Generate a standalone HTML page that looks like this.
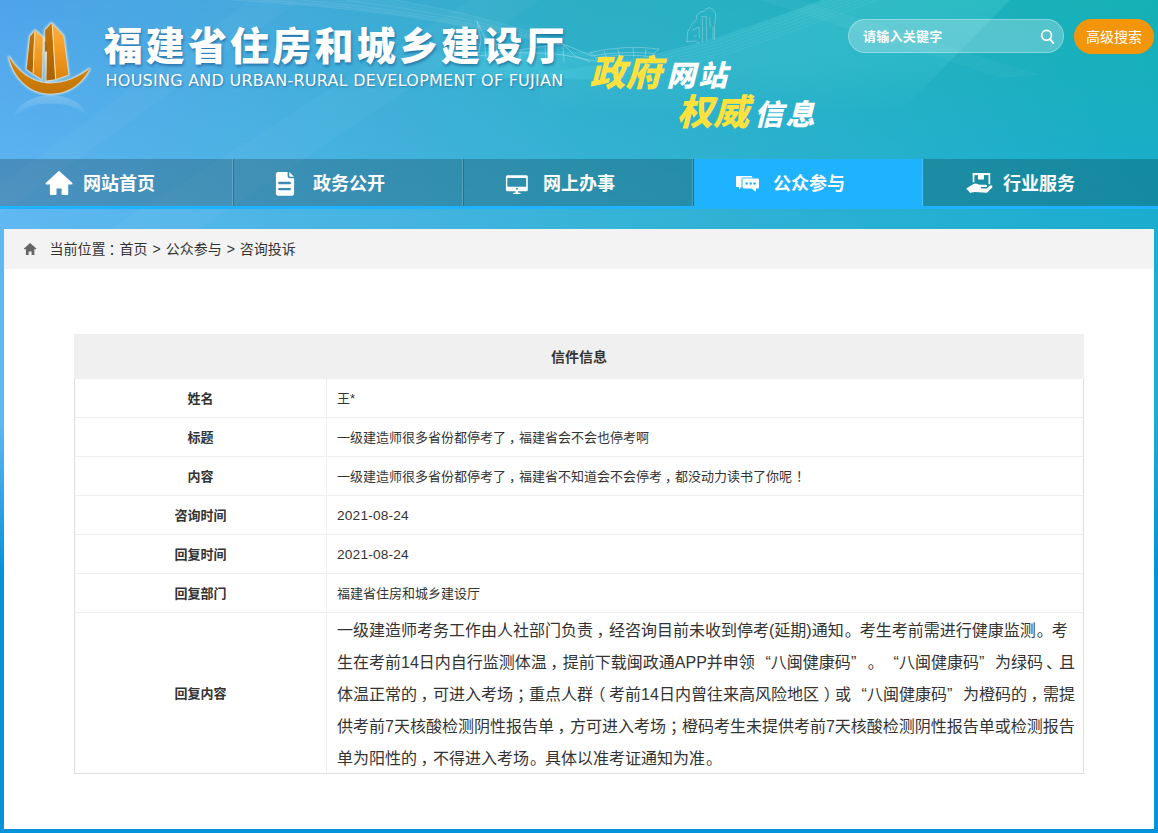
<!DOCTYPE html>
<html lang="zh-CN">
<head>
<meta charset="utf-8">
<title>福建省住房和城乡建设厅</title>
<style>
*{margin:0;padding:0;box-sizing:border-box;}
html,body{width:1158px;height:833px;overflow:hidden;}
body{text-spacing-trim:space-all;font-family:"Liberation Sans","Noto Sans CJK SC",sans-serif;font-size:13px;color:#333;background:#0391d8;position:relative;}
.bg{position:absolute;left:0;top:0;width:1158px;height:833px;background:#0492da;}
.bgB{position:absolute;left:0;top:0;width:1158px;height:600px;background:linear-gradient(to right,#60b8f2 0%,#4bb5e4 26%,#38b3d8 50%,#28b0d2 75%,#1badce 100%);-webkit-mask-image:linear-gradient(to bottom,#000 0,#000 420px,transparent 575px);mask-image:linear-gradient(to bottom,#000 0,#000 420px,transparent 575px);}
.bgA{position:absolute;left:0;top:0;width:1158px;height:214px;background:linear-gradient(to right,#4fa3ea 0%,#45a9dc 21%,#38acd0 36%,#2caec4 50%,#24b1bf 71%,#14b0b4 100%);-webkit-mask-image:linear-gradient(to bottom,#000 0,transparent 214px);mask-image:linear-gradient(to bottom,#000 0,transparent 214px);}
.deco{position:absolute;left:0;top:0;}
.header{position:absolute;left:0;top:0;width:1158px;height:159px;}
.logo{position:absolute;left:0;top:0;}
.title{position:absolute;left:103.5px;top:18px;font-size:39px;line-height:58px;font-weight:900;color:#fff;white-space:nowrap;letter-spacing:3.2px;text-shadow:1px 2px 3px rgba(0,50,110,.45);}
.subtitle{position:absolute;left:105.5px;top:71px;font-family:"DejaVu Sans","Liberation Sans",sans-serif;font-size:16px;line-height:20px;color:#fff;white-space:nowrap;letter-spacing:.25px;text-shadow:1px 1px 2px rgba(0,50,110,.4);}
.slogan{position:absolute;white-space:nowrap;font-weight:900;font-style:italic;color:#fff;line-height:40px;}
.s1{left:589.5px;top:54px;}
.s2{left:677px;top:93px;}
.slogan .big{font-size:36px;color:#ffe13e;letter-spacing:0px;}
.slogan .sm{font-size:29px;letter-spacing:2.5px;margin-left:5px;}
.search{position:absolute;left:848px;top:19px;width:216px;height:34px;border-radius:17px;background:rgba(255,255,255,.25);border:1px solid rgba(255,255,255,.3);}
.search span{position:absolute;left:14px;top:1px;line-height:32px;font-size:13px;font-weight:bold;color:#fff;letter-spacing:.25px;}
.search svg{position:absolute;left:190px;top:7px;overflow:visible;}
.adv{position:absolute;left:1074px;top:19px;width:80px;height:35px;border-radius:17.5px;background:#f39509;color:#fff;font-size:14px;line-height:36px;text-align:center;}
.nav{position:absolute;left:0;top:159px;width:1158px;height:50px;background:rgba(0,0,0,.2);border-bottom:3px solid #1eb2ff;}
.nav .it{position:absolute;top:0;width:230px;height:47px;color:#fff;font-size:18px;font-weight:bold;line-height:47px;}
.nav .it.on{background:#1eb2ff;}
.nav .it:after{content:"";position:absolute;right:0;top:0;width:1px;height:47px;background:rgba(0,0,0,.2);}
.nav .it:before{content:"";position:absolute;right:1px;top:0;width:1px;height:47px;background:rgba(255,255,255,.18);}
.nav .it.last:after,.nav .it.last:before{display:none;}
.nav .it span{position:absolute;left:79px;top:2px;white-space:nowrap;}
.nav .it svg{position:absolute;}
.main{position:absolute;left:4px;top:229px;width:1150px;height:600px;background:#fff;}
.crumb{position:absolute;left:0;top:0;width:1150px;height:40px;background:#f3f3f3;line-height:40px;font-size:14px;color:#333;}
.crumb span{position:absolute;left:45.5px;top:0;white-space:nowrap;word-spacing:1.1px;}
.crumb span i{font-style:normal;position:relative;left:3px;}
.crumb svg{position:absolute;left:19px;top:13px;}
.tb{position:absolute;left:70px;top:105px;width:1010px;height:440px;border:1px solid #dedede;border-top:0;}
.tb .h{position:absolute;left:-1px;top:0;width:1010px;height:45px;background:#f0f0f0;font-weight:bold;text-align:center;line-height:46px;font-size:14px;}
.tb .row{position:absolute;left:0;width:1008px;height:39px;border-bottom:1px solid #eee;}
.tb .k{position:absolute;left:0;top:0;width:252px;height:100%;border-right:1px solid #eee;text-align:center;font-weight:bold;line-height:40px;font-size:13px;}
.tb .v{position:absolute;left:262px;top:0;line-height:40px;font-size:13px;white-space:nowrap;}
.tb .r{position:absolute;left:262px;top:2px;font-size:16px;line-height:32px;}
.tb i{font-style:normal;}
.pc{position:relative;left:.22em;}
.ps{position:relative;left:.25em;}
.pl{position:relative;left:-.22em;}
.pr{position:relative;left:.31em;}
.pd{position:relative;left:.06em;}
.pe{position:relative;left:.3em;}
.pz{position:relative;left:.2em;}
.ql,.qr{font-style:normal;display:inline-block;width:16px;}
.ql{text-align:right;}
.qr{text-align:left;}
.tb .r span{display:block;white-space:nowrap;height:32px;}
</style>
</head>
<body>
<div class="bg"><div class="bgB"></div><div class="bgA"></div>
<svg class="deco" width="1158" height="229" viewBox="0 0 1158 229">
  <defs>
    <linearGradient id="d1" x1="0" y1="0" x2="1" y2="0"><stop offset="0" stop-color="#fff" stop-opacity="0"/><stop offset=".5" stop-color="#fff" stop-opacity=".10"/><stop offset="1" stop-color="#fff" stop-opacity="0"/></linearGradient>
    <linearGradient id="d2" gradientUnits="userSpaceOnUse" x1="0" y1="0" x2="0" y2="112"><stop offset="0" stop-color="#7ff0f0" stop-opacity=".16"/><stop offset=".6" stop-color="#7ff0f0" stop-opacity=".1"/><stop offset="1" stop-color="#7ff0f0" stop-opacity="0"/></linearGradient>
    <linearGradient id="d3" x1="0" y1="0" x2="1" y2="0"><stop offset="0" stop-color="#5fe0ee" stop-opacity="0"/><stop offset=".45" stop-color="#5fe0ee" stop-opacity=".32"/><stop offset="1" stop-color="#5fe0ee" stop-opacity="0"/></linearGradient>
  </defs>
  <path d="M0 215 L0 185 L250 0 L300 0 Z" fill="#fff" opacity=".03"/>
  <path d="M110 229 L470 0 L540 0 L200 229 Z" fill="#fff" opacity=".03"/>
  <path d="M540 74 L650 56 L714 39 L781 15.5 L823 0 L1010 0 L900 112 L540 112 Z" fill="url(#d2)"/>
  <g stroke="#fff" stroke-opacity=".11" stroke-width=".6" fill="none">
    <path d="M600 64.5 L650 56 L714 39 L781 15.5 L823 0"/><path d="M600 67.5 L652 58.6 L716 41.6 L783 18.1 L832 0"/><path d="M600 70.5 L654 61.2 L718 44.2 L785 20.7 L841 0"/><path d="M600 73.500 L656 63.8 L720 46.8 L787 23.3 L850 0"/><path d="M600 76.5 L658 66.4 L722 49.4 L789 25.9 L859 0"/><path d="M600 79.5 L660 69 L724 52 L791 28.500 L868 0"/><path d="M600 82.5 L662 71.6 L726 54.6 L793 31.1 L877 0"/>
  </g>
  <path d="M760 0 L800 0 L1040 75 L1000 78 Z" fill="#fff" opacity=".035"/>
  <path d="M400 54 Q520 48 660 54 L660 84 Q520 72 400 84 Z" fill="url(#d3)"/>
  <g stroke="#fff" stroke-opacity=".13" stroke-width=".7" fill="none">
    <path d="M230 0 Q400 8 562 46"/><path d="M262 0 Q420 10 562 45"/><path d="M300 0 Q440 12 562 44"/><path d="M345 0 Q460 14 562 43"/><path d="M395 0 Q480 14 562 42"/>
  </g>
  <path d="M395 0 Q480 14 562 42 L562 46 Q400 8 230 0 Z" fill="#fff" opacity=".045"/>
  <g stroke="#fff" stroke-opacity=".38" stroke-width=".7" fill="none" stroke-linejoin="round" stroke-linecap="round">
    <path d="M686.8 41.7 L687.8 31.6 L692.2 23.5 L696.2 20.2 L696.6 15.5 L700.3 12.1 L704.3 11.4 L706.3 8.7 L709.3 7.7 L713 9.4 L715.4 13.4 L715.7 17.5 L714.7 25.6 L714.4 39"/>
    <path d="M702.3 18.2 L702.6 41.7 M706.3 17.5 L706.6 40.4 M701.6 16.5 L706.6 16.8 M709.7 17.5 L710.3 26.9 M713 26.9 L713 39 M692.2 30.3 L698.9 26.9 L699.6 37.7 M686.8 41.7 L696.2 41 L698.9 43.7 M694 36.5 L696.5 35.5"/>
    <path d="M590 52.5 Q625 44.5 659 49 L654 53.5 Q625 50.5 594 55.5 Z M594 55.5 L597 60 M654 53.5 L650 58.5 M597 57.5 Q625 53.5 651 56.5 M604 51 L607 59 M618 49 L620 58 M633 48.5 L634 57 M646 49.5 L645 57"/>
    <path d="M477 21 L484 36 L496 44 L520 50 L545 46 L563 44 L592 56 M477 21 L481 40 L478 56 M484 36 L486 58 M496 44 L497 60 M520 50 L520 61 M545 46 L546 60 M563 44 L564 61 M478 56 Q520 50 564 55 L600 62 M563 44 L575 56 L590 62"/>
  </g>
</svg></div>
<div class="header">
  <svg class="logo" width="100" height="120" viewBox="0 0 100 120">
    <defs>
      <linearGradient id="lg1" x1="0" y1="0" x2="0" y2="1"><stop offset="0" stop-color="#f9b043"/><stop offset=".5" stop-color="#f39a22"/><stop offset="1" stop-color="#dd8410"/></linearGradient>
      <linearGradient id="lg2" x1="0" y1="0" x2="0" y2="1"><stop offset="0" stop-color="#c67708"/><stop offset="1" stop-color="#aa6104"/></linearGradient>
      <linearGradient id="lg3" x1="0" y1="0" x2="0" y2="1"><stop offset="0" stop-color="#d98a10"/><stop offset="1" stop-color="#c47405"/></linearGradient>
      <linearGradient id="lg4" x1="0" y1="0" x2="0" y2="1"><stop offset="0" stop-color="#fff" stop-opacity=".2"/><stop offset="1" stop-color="#fff" stop-opacity="0"/></linearGradient>
      <filter id="glow" x="-20%" y="-20%" width="140%" height="140%"><feGaussianBlur stdDeviation="0.9"/></filter>
    </defs>
    <g filter="url(#glow)" fill="#fff0d2" stroke="#fff0d2" stroke-width="2" opacity=".95">
      <path d="M8.8 56.5 C18 72 32 83 50 83.5 C66 83.5 80 76.5 89.8 68.6 C82 84 68 93.8 50.5 93.8 C30 93.8 13.5 78 8.8 56.5 Z"/>
      <path d="M35 30.5 L30 36.7 L26.7 69 L32.9 73.4 L41.8 78.9 L42.8 37.4 Z"/>
      <path d="M51.6 23.3 L45 30.2 L46.4 80.6 L55.5 79.2 L68.4 74.8 L63.4 36 Z"/>
    </g>
    <path fill="url(#lg3)" d="M8.8 56.5 C18 72 32 83 50 83.5 C66 83.5 80 76.5 89.8 68.6 C82 84 68 93.8 50.5 93.8 C30 93.8 13.5 78 8.8 56.5 Z"/>
    <path fill="url(#lg2)" d="M35 30.5 L30 36.7 L26.7 69 L32.9 73.4 L34.2 34 Z"/>
    <path fill="url(#lg1)" d="M35 30.5 L34.2 34 L32.9 73.4 L41.8 78.9 L42.8 37.4 Z"/>
    <path fill="#ffe2ad" d="M34.6 31.5 L35.4 31.5 L33.6 73.6 L32.6 73.2 Z"/>
    <path fill="url(#lg2)" d="M51.6 23.3 L45 30.2 L45.5 51 L46.9 51.2 L46.4 80.6 L55.5 79.2 L52.4 27 Z"/>
    <path fill="url(#lg1)" d="M51.6 23.3 L52.4 27 L55.5 79.2 L68.4 74.8 L63.4 36 Z"/>
    <path fill="#ffe2ad" d="M51.8 24.5 L52.8 24.8 L56.2 79 L55.1 79.3 Z"/>
    <path fill="#8a4a02" opacity=".55" d="M44.6 42 L46.2 41.4 L46.9 51.5 L45 52 Z"/>
    <path fill="url(#lg4)" d="M13 118 C18 104 32 95.2 50.5 95.2 C68 95.2 82 102 88 116 C78 107 66 103.5 50 103.5 C34 103.5 22 108 13 118 Z"/>
  </svg>
  <div class="title">福建省住房和城乡建设厅</div>
  <div class="subtitle">HOUSING AND URBAN-RURAL DEVELOPMENT OF FUJIAN</div>
  <div class="slogan s1"><span class="big">政府</span><span class="sm">网站</span></div>
  <div class="slogan s2"><span class="big">权威</span><span class="sm">信息</span></div>
  <div class="search"><span>请输入关键字</span><svg width="16" height="16" viewBox="1039 27 16 16"><circle cx="1046.6" cy="35.3" r="4.9" fill="none" stroke="#fff" stroke-width="1.8"/><path d="M1050.1 39.1 L1053.3 43.1" stroke="#fff" stroke-width="1.8" stroke-linecap="round" fill="none"/></svg></div>
  <div class="adv">高级搜索</div>
</div>
<div class="nav">
  <div class="it" style="left:4px"><svg width="30" height="28" viewBox="44 169 30 28" style="left:40px;top:10px"><path fill="#fff" d="M59 170.8 L72.4 182.9 Q73 184.4 71.6 184.4 L68.2 184.4 L68.2 194.2 Q68.2 195 67.4 195 L62.4 195 Q61.6 195 61.6 194.2 L61.6 188.4 L56.5 188.4 L56.5 194.2 Q56.5 195 55.7 195 L50.7 195 Q49.9 195 49.9 194.2 L49.9 184.4 L46.5 184.4 Q45.1 184.4 45.7 182.9 Z"/></svg><span>网站首页</span></div>
  <div class="it" style="left:234px"><svg width="24" height="28" viewBox="274 170 24 28" style="left:40px;top:11px"><path fill="#fff" d="M278.2 171.9 L287.6 171.9 L287.6 176 Q287.6 178.3 289.9 178.3 L294.1 178.3 L294.1 193.4 Q294.1 195.7 291.8 195.7 L278.2 195.7 Q275.9 195.7 275.9 193.4 L275.9 174.2 Q275.9 171.9 278.2 171.9 Z M289.3 172 L294 176.7 L290.3 176.7 Q289.3 176.7 289.3 175.7 Z"/><path stroke="#398bb4" stroke-width="2.3" stroke-linecap="round" fill="none" d="M279.3 183 H289.8 M279.3 189.2 H289.8"/></svg><span>政务公开</span></div>
  <div class="it" style="left:464px"><svg width="26" height="24" viewBox="504 173 26 24" style="left:40px;top:14px"><path fill="#fff" fill-rule="evenodd" d="M507.4 175.2 H526.3 Q527.8 175.2 527.8 176.7 V189.7 Q527.8 191.2 526.3 191.2 H518 L518.4 192.7 H519.8 Q520.8 192.7 520.8 193.3 Q520.8 193.9 519.8 193.9 H513.9 Q512.9 193.9 512.9 193.3 Q512.9 192.7 513.9 192.7 H515.3 L515.7 191.2 H507.4 Q505.9 191.2 505.9 189.7 V176.7 Q505.9 175.2 507.4 175.2 Z M507.3 178 V186.8 H526.2 V178 Z M516.9 187.8 A0.95 0.95 0 1 0 516.9 189.7 A0.95 0.95 0 1 0 516.9 187.8 Z"/></svg><span>网上办事</span></div>
  <div class="it on" style="left:694px"><svg width="28" height="22" viewBox="734 173 28 22" style="left:40px;top:14px"><path fill="#fff" d="M737 176.1 H751.5 Q752.3 176.1 752.3 177 V177.3 H743 Q741 177.3 741 179.3 V187.3 L739.3 189.6 L738.7 186.9 H737 Q736 186.9 736 185.9 V177.1 Q736 176.1 737 176.1 Z"/><path fill="#fff" fill-opacity=".5" d="M741 179.3 Q741 177.3 743 177.3 H752.3 V178.6 H743.8 Q743 178.6 743 179.4 V187.6 H741 Z"/><path fill="#fff" d="M744 178.6 H757.9 Q759 178.6 759 179.7 V187.4 Q759 188.5 757.9 188.5 H756 L755.7 191.8 L751.8 188.5 H744 Q742.9 188.5 742.9 187.4 V179.7 Q742.9 178.6 744 178.6 Z"/><circle cx="746.7" cy="183.5" r="1.25" fill="#1eb2ff"/><circle cx="750.7" cy="183.5" r="1.25" fill="#1eb2ff"/><circle cx="754.6" cy="183.5" r="1.25" fill="#1eb2ff"/></svg><span>公众参与</span></div>
  <div class="it last" style="left:924px"><svg width="30" height="24" viewBox="964 171 30 24" style="left:40px;top:12px"><path fill="none" stroke="#fff" stroke-width="1.7" d="M973.55 182.3 V174.1 H989.35 V184.3"/><path fill="#fff" d="M972.7 173.1 H990.2 V175.1 H972.7 Z"/><path fill="#fff" d="M978 175 H984 V179.5 H978 Z"/><path fill="#fff" d="M966.2 188.4 L973.5 184.1 Q975.5 183.1 977.5 183.9 L979.5 184.8 L985.8 184.8 Q987.3 185 987.1 186 Q986.9 186.9 985.8 186.9 H981.6 Q980.8 186.9 980.8 187.65 Q980.8 188.4 981.6 188.4 H986.6 L990.2 185.5 Q991.5 184.8 992.3 185.9 Q992.8 186.9 992 187.7 L987.6 192.3 Q987.2 192.7 986.5 192.7 L975 192 Q973 192 971.5 192.6 L970.3 193 Z"/></svg><span>行业服务</span></div>
</div>
<div class="main">
  <div class="crumb"><svg width="14" height="14" viewBox="23 242 14 14"><path fill="#666" d="M30.1 243 L36.3 248.6 Q36.5 249.3 35.9 249.3 L34.4 249.3 L34.4 254.4 Q34.4 254.9 33.9 254.9 L31.6 254.9 L31.6 251.4 L28.7 251.4 L28.7 254.9 L26.4 254.9 Q25.9 254.9 25.9 254.4 L25.9 249.3 L24.4 249.3 Q23.8 249.3 24 248.6 Z"/></svg><span>当前位置<i>：</i>首页 &gt; 公众参与 &gt; 咨询投诉</span></div>
  <div class="tb">
    <div class="h">信件信息</div>
    <div class="row" style="top:45px"><div class="k">姓名</div><div class="v">王*</div></div>
    <div class="row" style="top:84px"><div class="k">标题</div><div class="v">一级建造师很多省份都停考了<i class="pc">，</i>福建省会不会也停考啊</div></div>
    <div class="row" style="top:123px"><div class="k">内容</div><div class="v">一级建造师很多省份都停考了<i class="pc">，</i>福建省不知道会不会停考<i class="pc">，</i>都没动力读书了你呢<i class="pe">！</i></div></div>
    <div class="row" style="top:162px"><div class="k">咨询时间</div><div class="v" style="font-size:13.7px;letter-spacing:.19px">2021-08-24</div></div>
    <div class="row" style="top:201px"><div class="k">回复时间</div><div class="v" style="font-size:13.7px;letter-spacing:.19px">2021-08-24</div></div>
    <div class="row" style="top:240px"><div class="k">回复部门</div><div class="v">福建省住房和城乡建设厅</div></div>
    <div class="row last" style="top:279px;height:160px;border-bottom:0"><div class="k" style="line-height:162px">回复内容</div><div class="r"><span>一级建造师考务工作由人社部门负责<i class="pc">，</i>经咨询目前未收到停考(延期)通知<i class="pd">。</i>考生考前需进行健康监测<i class="pd">。</i>考</span><span>生在考前14日内自行监测体温<i class="pc">，</i>提前下载闽政通APP并申领<i class="ql">“</i>八闽健康码<i class="qr">”</i><i class="pd">。</i><i class="ql">“</i>八闽健康码<i class="qr">”</i>为绿码<i class="pz">、</i>且</span><span>体温正常的<i class="pc">，</i>可进入考场<i class="ps">；</i>重点人群<i class="pl">（</i>考前14日内曾往来高风险地区<i class="pr">）</i>或<i class="ql">“</i>八闽健康码<i class="qr">”</i>为橙码的<i class="pc">，</i>需提</span><span>供考前7天核酸检测阴性报告单<i class="pc">，</i>方可进入考场<i class="ps">；</i>橙码考生未提供考前7天核酸检测阴性报告单或检测报告</span><span>单为阳性的<i class="pc">，</i>不得进入考场<i class="pd">。</i>具体以准考证通知为准<i class="pd">。</i></span></div></div>
  </div>
</div>
</body>
</html>
